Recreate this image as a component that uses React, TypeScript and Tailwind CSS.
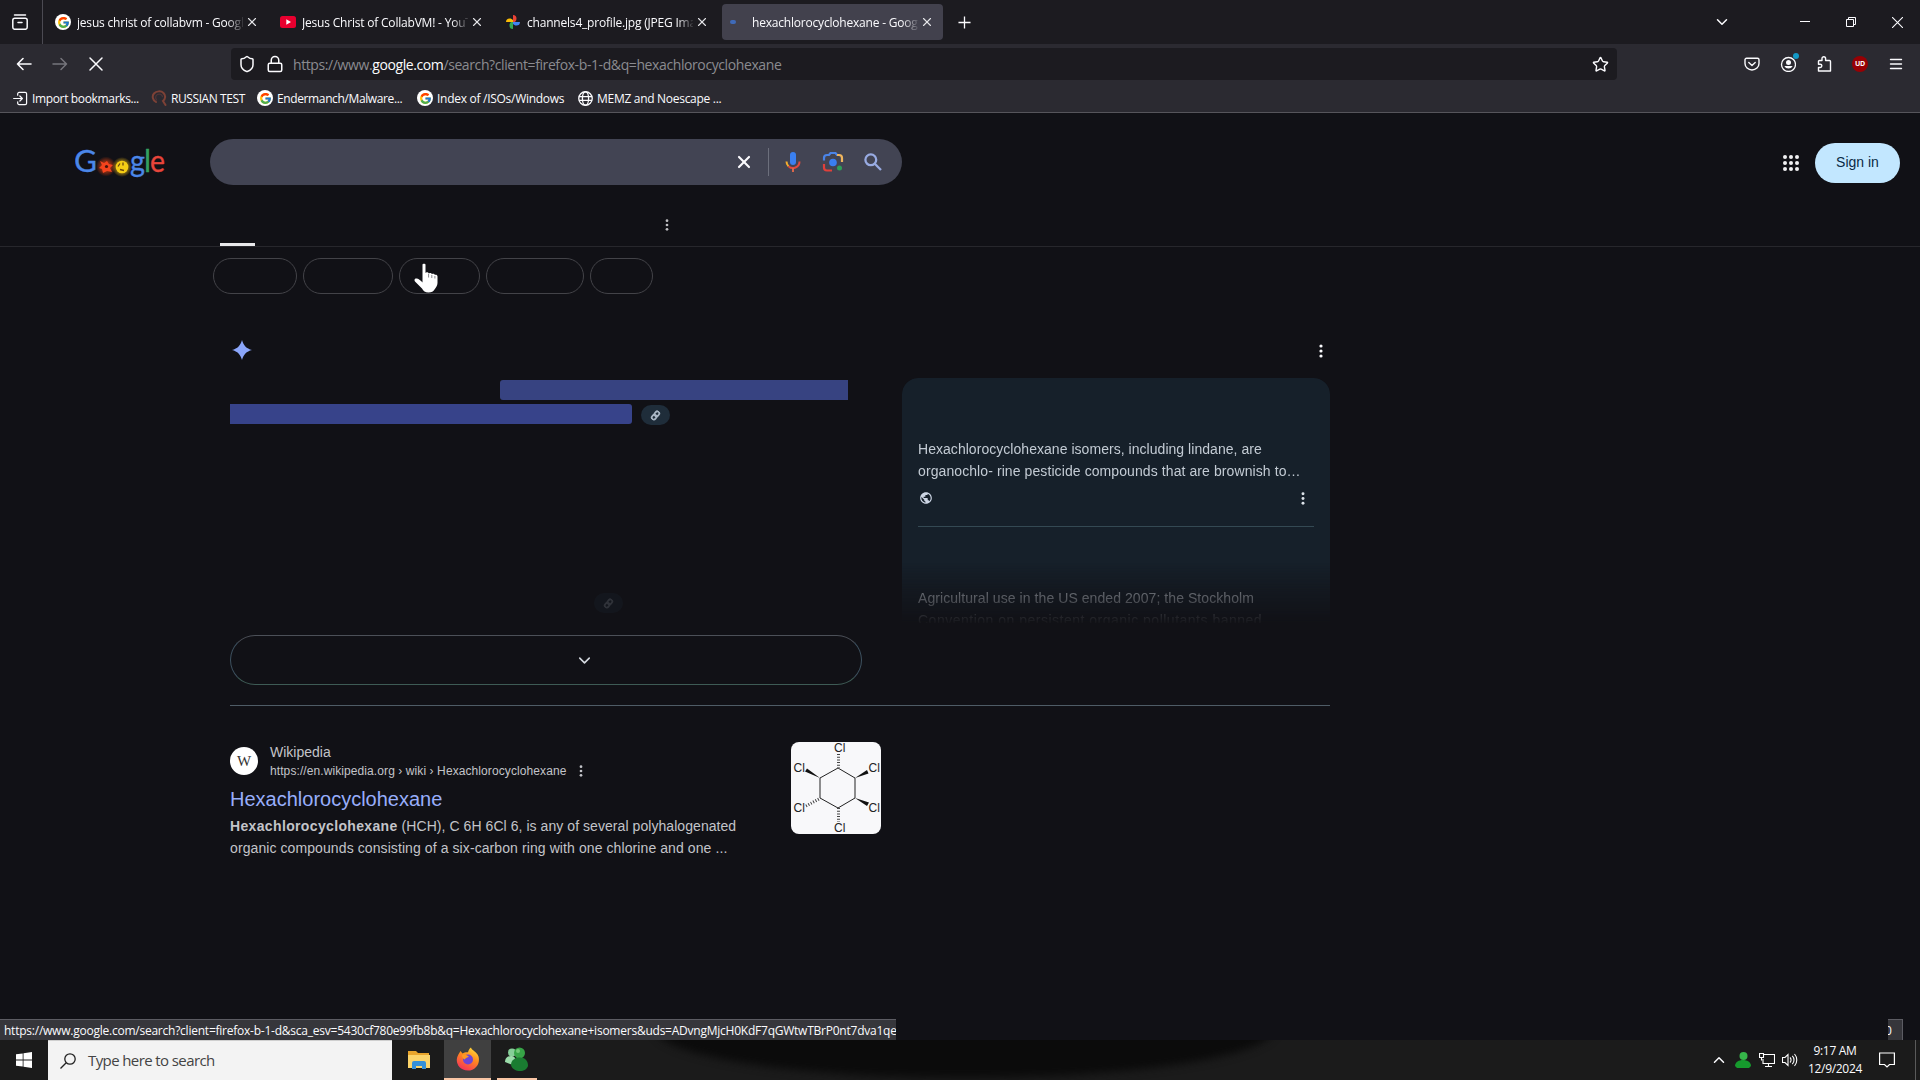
import type { ReactNode } from "react";
import { ChevronDown, ChevronUp, Lock, Shield, Star, X } from "lucide-react";
import { FcGoogle } from "react-icons/fc";
import { MdPublic } from "react-icons/md";

type Tab = {
  title: string;
  icon: ReactNode;
  active?: boolean;
};

type Bookmark = {
  label: string;
  icon: ReactNode;
  width: string;
  tracking: string;
};

const GoogleFavicon = () => (
  <span className="flex h-4 w-4 shrink-0 items-center justify-center rounded-full bg-white">
    <FcGoogle className="h-[13px] w-[13px]" />
  </span>
);

const YoutubeFavicon = () => (
  <svg viewBox="0 0 16 16" className="h-4 w-4 shrink-0">
    <rect y="2" width="16" height="12" rx="2.5" fill="#e8002f" />
    <path d="M6.3 5.3 11 8l-4.7 2.7z" fill="#fff" />
  </svg>
);

const PhotosFavicon = () => (
  <svg viewBox="0 0 16 16" className="h-4 w-4 shrink-0">
    <path d="M8 8V1a3.6 3.6 0 0 1 3.5 3.6c0 1.5-.6 2.6-1.5 3.4z" fill="#ea4335" />
    <path d="M8 8h7a3.6 3.6 0 0 1-3.6 3.5C9.9 11.5 8.8 10.9 8 10z" fill="#4285f4" />
    <path d="M8 8v7a3.6 3.6 0 0 1-3.5-3.6C4.5 9.9 5.1 8.8 6 8z" fill="#34a853" />
    <path d="M8 8H1a3.6 3.6 0 0 1 3.6-3.5C6.1 4.5 7.2 5.1 8 6z" fill="#fbbc04" />
  </svg>
);

const LoadingDot = () => (
  <span className="flex h-4 w-4 shrink-0 items-center">
    <span className="h-1 w-1.5 rounded-full bg-[#3f6ab8]" />
  </span>
);

const ImportIcon = () => (
  <svg viewBox="0 0 16 16" className="h-[15px] w-[15px] shrink-0" fill="none" stroke="#fbfbfe" strokeWidth="1.3" strokeLinecap="round" strokeLinejoin="round">
    <path d="M5 4.5V3a1.5 1.5 0 0 1 1.5-1.5H13A1.5 1.5 0 0 1 14.5 3v10a1.5 1.5 0 0 1-1.5 1.5H6.5A1.5 1.5 0 0 1 5 13v-1.5M.7 8h9M7.3 5.3 10 8l-2.7 2.7" />
  </svg>
);

const RussianIcon = () => (
  <svg viewBox="0 0 16 16" className="h-4 w-4 shrink-0" fill="none" strokeLinecap="round">
    <path d="M5 12C1.500 10 .8 6 3 3.500s7-3 9.500-.5 2 6-.5 8l2.500 4" stroke="#7d4136" strokeWidth="2" />
    <path d="M5.500 10C4 8 4.500 5.500 6.500 4.500s4.500 0 5 2" stroke="#4c3438" strokeWidth="1.3" />
  </svg>
);

const GlobeIcon = () => (
  <svg viewBox="0 0 16 16" className="h-[15px] w-[15px] shrink-0" fill="none" stroke="#fbfbfe" strokeWidth="1.4">
    <circle cx="8" cy="8" r="7.2" />
    <ellipse cx="8" cy="8" rx="3.3" ry="7.2" />
    <path d="M1 6h14M1 10h14" />
  </svg>
);

const tabs: Tab[] = [
  { title: "jesus christ of collabvm - Google Search", icon: <GoogleFavicon /> },
  { title: "Jesus Christ of CollabVM! - YouTube", icon: <YoutubeFavicon /> },
  { title: "channels4_profile.jpg (JPEG Image)", icon: <PhotosFavicon /> },
  { title: "hexachlorocyclohexane - Google Search", icon: <LoadingDot />, active: true },
];

const bookmarks: Bookmark[] = [
  { label: "Import bookmarks...", icon: <ImportIcon />, width: "w-[138px]", tracking: "tracking-[-0.35px]" },
  { label: "RUSSIAN TEST", icon: <RussianIcon />, width: "w-[106px]", tracking: "tracking-[-0.42px]" },
  { label: "Endermanch/Malware...", icon: <GoogleFavicon />, width: "w-[160px]", tracking: "tracking-[-0.38px]" },
  { label: "Index of /ISOs/Windows", icon: <GoogleFavicon />, width: "w-[161px]", tracking: "tracking-[-0.28px]" },
  { label: "MEMZ and Noescape ...", icon: <GlobeIcon />, width: "w-[160px]", tracking: "tracking-[-0.29px]" },
];

const chips = ["w-[84px]", "w-[90px]", "w-[81px]", "w-[98px]", "w-[63px]"];

const Dots = ({ className }: { className: string }) => (
  <svg viewBox="0 0 4 14" className={className} fill="currentColor">
    <circle cx="2" cy="2" r="1.6" />
    <circle cx="2" cy="7" r="1.6" />
    <circle cx="2" cy="12" r="1.6" />
  </svg>
);

const TabStrip = () => (
  <div className="flex h-11 bg-[#1c1b20]">
    <div className="flex w-[43px] items-center border-r border-[#4b4a52] pl-3">
      <svg viewBox="0 0 16 16" className="h-4 w-4" fill="none" stroke="#fbfbfe" strokeWidth="1.5" strokeLinecap="round">
        <rect x=".8" y="4.3" width="14.4" height="11" rx="2" />
        <path d="M2.5 1h11M6 8.5h4" />
      </svg>
    </div>
    <div className="flex gap-1 py-1 pl-1">
      {tabs.map((tab) => (
        <div
          key={tab.title}
          className={`flex h-9 w-[221px] items-center rounded px-2 ${tab.active ? "bg-[#42414d]" : ""}`}
        >
          {tab.icon}
          <span className="ml-1.5 w-[166px] overflow-hidden pt-0.5 text-[12px] tracking-[-0.2px] whitespace-nowrap [mask-image:linear-gradient(to_right,black_150px,transparent_168px)]">
            {tab.title}
          </span>
          <X className="ml-0.5 h-3.5 w-3.5 shrink-0 text-[#e6e6ea]" strokeWidth={1.9} />
        </div>
      ))}
    </div>
    <svg viewBox="0 0 14 14" className="mt-4 ml-[15px] h-[13px] w-[13px]" stroke="#fbfbfe" strokeWidth="1.4">
      <path d="M7 .5v13M.5 7h13" />
    </svg>
    <div className="ml-auto flex items-center pr-[17px]">
      <ChevronDown className="mr-[69px] h-[18px] w-[18px]" strokeWidth={2} />
      <svg viewBox="0 0 10 10" className="mr-9 h-2.5 w-2.5" stroke="#fbfbfe">
        <path d="M0 4.5h10" />
      </svg>
      <svg viewBox="0 0 10 10" className="mr-9 h-2.5 w-2.5" fill="none" stroke="#fbfbfe">
        <path d="M.5 2.5h7v7h-7zM2.5 2.5v-2h7v7h-2" />
      </svg>
      <svg viewBox="0 0 10 10" className="h-[11px] w-[11px]" stroke="#fbfbfe">
        <path d="m0 0 10 10M10 0 0 10" />
      </svg>
    </div>
  </div>
);

const NavBar = () => (
  <div className="flex h-10 items-center">
    <svg viewBox="0 0 16 16" className="ml-4 h-4 w-4" fill="none" stroke="#fbfbfe" strokeWidth="1.6" strokeLinecap="round" strokeLinejoin="round">
      <path d="M15 8H1.5M7 2.5 1.5 8 7 13.5" />
    </svg>
    <svg viewBox="0 0 16 16" className="ml-5 h-4 w-4" fill="none" stroke="#76757c" strokeWidth="1.5" strokeLinecap="round" strokeLinejoin="round">
      <path d="M1 8h13.5M9 2.5 14.5 8 9 13.5" />
    </svg>
    <svg viewBox="0 0 16 16" className="ml-5 h-4 w-4" stroke="#fbfbfe" strokeWidth="1.5" strokeLinecap="round">
      <path d="m2 2 12 12M14 2 2 14" />
    </svg>
    <div className="ml-[127px] flex h-8 w-[1386px] items-center rounded bg-[#1c1b20] pr-2 pl-[7px]">
      <Shield className="h-[18px] w-[18px]" strokeWidth={2} />
      <Lock className="ml-2.5 h-[18px] w-[18px]" strokeWidth={2} />
      <span className="ml-[9px] pt-px text-[14px] tracking-[-0.4px] whitespace-nowrap text-[#8b8b90]">
        https://www.<span className="text-[#fbfbfe]">google.com</span>
        /search?client=firefox-b-1-d&amp;q=hexachlorocyclohexane
      </span>
      <Star className="ml-auto h-[17px] w-[17px]" strokeWidth={2} />
    </div>
    <div className="ml-auto flex items-center gap-5 pr-4">
      <svg viewBox="0 0 16 16" className="h-4 w-4" fill="none" stroke="#fbfbfe" strokeWidth="1.4" strokeLinecap="round" strokeLinejoin="round">
        <path d="M2.5 2.2h11A1.5 1.5 0 0 1 15 3.7v3.8a7 6.5 0 0 1-14 0V3.7a1.5 1.5 0 0 1 1.500-1.5zM4.8 6.5 8 9.4l3.2-2.9" />
      </svg>
      <div className="relative h-4 w-4">
        <svg viewBox="0 0 16 16" className="h-4 w-4">
          <circle cx="8.5" cy="8.5" r="7" fill="none" stroke="#fbfbfe" strokeWidth="1.3" />
          <circle cx="8.5" cy="6.5" r="2.5" fill="#fbfbfe" />
          <path d="M4.3 10h8.4a4.7 4.7 0 0 1-8.4 0z" fill="#fbfbfe" />
        </svg>
        <span className="absolute -top-[3px] -right-[3px] h-1.5 w-1.5 rounded-full bg-[#1399c6]" />
      </div>
      <svg viewBox="0 0 16 16" className="h-4 w-4" fill="none" stroke="#fbfbfe" strokeWidth="1.4" strokeLinejoin="round">
        <path d="M6 4.5v-2a1.8 1.8 0 0 1 3.6 0v2h3.9a1 1 0 0 1 1 1V15h-12v-3.5h1.7a1.6 1.6 0 0 0 0-3.3H2.5V5.5a1 1 0 0 1 1-1z" />
      </svg>
      <span className="flex h-4 w-4 items-center justify-center rounded-full bg-[#970004] text-[7px] font-bold tracking-tighter">
        UD
      </span>
      <svg viewBox="0 0 16 16" className="h-4 w-4" stroke="#fbfbfe" strokeWidth="1.4" strokeLinecap="round">
        <path d="M2.5 3.5h11M2.5 8h11M2.5 12.5h11" />
      </svg>
    </div>
  </div>
);

const BookmarksBar = () => (
  <div className="flex h-[29px] items-center border-b border-[#56555b] pl-[13px]">
    {bookmarks.map((bookmark) => (
      <div key={bookmark.label} className={`flex items-center gap-1 ${bookmark.width}`}>
        {bookmark.icon}
        <span className={`pt-0.5 text-[12px] whitespace-nowrap ${bookmark.tracking}`}>{bookmark.label}</span>
      </div>
    ))}
  </div>
);

const GoogleLogo = () => (
  <svg viewBox="0 0 90 36" className="mt-2 h-9 w-[90px]" fontFamily="Lato, sans-serif" fontSize="30" strokeWidth=".3">
    <defs>
      <radialGradient id="redGlow">
        <stop offset=".5" stopColor="#a83413" stopOpacity=".8" />
        <stop offset="1" stopColor="#a83413" stopOpacity="0" />
      </radialGradient>
      <radialGradient id="yellowGlow">
        <stop offset=".5" stopColor="#c59a14" stopOpacity=".8" />
        <stop offset="1" stopColor="#c59a14" stopOpacity="0" />
      </radialGradient>
    </defs>
    <text x="-1" y="24" textLength="23" lengthAdjust="spacingAndGlyphs" fill="#4b87e8" stroke="#4b87e8">G</text>
    <circle cx="31" cy="18.5" r="10" fill="url(#redGlow)" />
    <path d="m25 13 4 2 3-2 2 3 4 1-3 3 2 4-5-1-4 2-1-4-3-1 3-3z" fill="#f5441d" />
    <circle cx="31.5" cy="18.5" r="1.6" fill="#47130c" />
    <circle cx="47" cy="19" r="10" fill="url(#yellowGlow)" />
    <circle cx="47" cy="19" r="6.3" fill="#f6ce15" />
    <path d="m43 18.500 2-3M48 14.500v3M45 21.500l4 1" stroke="#6b4710" strokeWidth="1.3" />
    <text x="55" y="24" textLength="15" lengthAdjust="spacingAndGlyphs" fill="#4b87e8" stroke="#4b87e8">g</text>
    <text x="69" y="24" fill="#34a060" stroke="#34a060">l</text>
    <text x="75" y="24" textLength="15" lengthAdjust="spacingAndGlyphs" fill="#e8453b" stroke="#e8453b">e</text>
  </svg>
);

const MicIcon = () => (
  <svg viewBox="0 0 24 24" className="h-6 w-6" fill="none">
    <rect x="9" y="2" width="6" height="13" rx="3" fill="#3a80f0" />
    <path d="M5.5 11.5a6.5 6.5 0 0 0 2 4.7" stroke="#f6ae2d" strokeWidth="2" />
    <path d="M7.5 16.2a6.5 6.5 0 0 0 11-4.7" stroke="#e04a3f" strokeWidth="2" />
    <path d="M12 18v4" stroke="#d8664a" strokeWidth="2" />
  </svg>
);

const LensIcon = () => (
  <svg viewBox="0 0 24 24" className="h-6 w-6" fill="none" strokeWidth="2.2">
    <path d="M3 10.5V8a3 3 0 0 1 3-3h2l1.5-2h5L16 5h1" stroke="#4a84e8" />
    <path d="M16 5h2a3 3 0 0 1 3 3v4" stroke="#efb55d" />
    <path d="M3 14v3.5a3 3 0 0 0 3 3h5" stroke="#e0403b" />
    <circle cx="12" cy="12.5" r="3.8" fill="#3a7ef0" />
    <circle cx="18.5" cy="18" r="2.5" fill="#2f9e58" />
  </svg>
);

const SearchIcon = () => (
  <svg viewBox="0 0 18 18" className="ml-[19px] h-[18px] w-[18px]" fill="none" stroke="#98abe2" strokeWidth="2.3">
    <circle cx="6.8" cy="6.8" r="5.4" />
    <path d="m10.8 10.8 6.2 6.2" />
  </svg>
);

const HandCursor = () => (
  <svg viewBox="0 0 24 30" className="absolute top-1 left-[14px] h-[30px] w-6">
    <path
      d="M8.5 1.5c0-1 3-1 3 0V10c.5-1 3-.8 3.200.5.6-1 3-.7 3.200.7.8-.8 2.800-.5 3 .8.8-.6 2.600-.2 2.600 1.500V20c0 3-2 5-3 6.500-1 2-3 3-6 3-3.500 0-5-1.500-6.500-4L1 18.500C-.3 16.500 1 15 3 15.500c2 .5 3.500 2 5.500 4z"
      fill="#fff"
    />
    <path d="M14.6 11v3.5M17.8 12v3M20.9 13v2.5" stroke="#55555c" strokeWidth=".7" />
  </svg>
);

const SearchHeader = () => (
  <>
    <div className="flex h-[72px] items-start pt-[26px] pl-[75px]">
      <div className="flex h-[46px] w-[135px] items-center">
        <GoogleLogo />
      </div>
      <div className="flex h-[46px] w-[692px] items-center justify-end rounded-full bg-[#424453] pr-5">
        <X className="h-5 w-5" strokeWidth={2.6} />
        <span className="ml-[14px] h-7 w-px bg-[#6c6f7c]" />
        <span className="ml-3">
          <MicIcon />
        </span>
        <span className="ml-4">
          <LensIcon />
        </span>
        <SearchIcon />
      </div>
      <div className="mr-5 ml-auto flex items-center gap-4 pt-1">
        <svg viewBox="0 0 16 16" className="h-4 w-4" fill="#f1f1f3">
          {[2, 8, 14].map((y) =>
            [2, 8, 14].map((x) => <circle key={`${x}-${y}`} cx={x} cy={y} r="2" />),
          )}
        </svg>
        <button type="button" className="h-10 w-[85px] rounded-full bg-[#c2e7ff] pb-0.5 text-sm text-[#0a2a45]">
          Sign in
        </button>
      </div>
    </div>
    <div className="flex h-[62px] items-end border-b border-[#27272c] pl-[220px]">
      <span className="h-[3px] w-[35px] bg-[#e8e8ea]" />
      <Dots className="mb-[15px] ml-[410px] h-3 w-1 text-[#bfbfc3]" />
    </div>
    <div className="flex gap-1.5 pt-[11px] pl-[213px]">
      {chips.map((width, i) => (
        <div key={width} className={`relative h-9 rounded-full border border-[#434348] ${width}`}>
          {i === 2 && <HandCursor />}
        </div>
      ))}
    </div>
  </>
);

const LinkPill = ({ className }: { className: string }) => (
  <span className={`flex h-5 w-[29px] items-center justify-center rounded-full bg-[#1f2d3a] ${className}`}>
    <svg viewBox="0 0 12 12" className="h-[11px] w-[11px] -rotate-50" fill="none" stroke="#a9b6c4" strokeWidth="1.9">
      <rect x=".8" y="3.8" width="5.7" height="4.4" rx="2.2" />
      <rect x="5.5" y="3.8" width="5.7" height="4.4" rx="2.2" />
    </svg>
  </span>
);

const Overview = () => (
  <div className="mt-9 ml-[230px] w-[1100px] border-b border-[#4f5c66] pb-5">
    <div className="flex h-12 items-start justify-between pt-2.5 pr-[7px] pl-0.5">
      <svg viewBox="0 0 20 20" className="h-5 w-5" fill="#8ba6fb">
        <path d="M10 0c1.3 5.2 4.5 8.7 10 10-5.5 1.3-8.7 4.8-10 10C8.7 14.8 5.5 11.3 0 10 5.500 8.7 8.7 5.200 10 0z" />
      </svg>
      <Dots className="mt-1 h-[14px] w-1" />
    </div>
    <div className="flex h-[307px] justify-between">
      <div className="flex w-[632px] flex-col pt-0.5">
        <div className="ml-[270px] h-5 w-[348px] rounded-l-[3px] bg-[#374381]" />
        <div className="mt-1 flex">
          <div className="h-5 w-[402px] rounded-r-[3px] bg-[#37438a]" />
          <LinkPill className="mt-px ml-[9px]" />
        </div>
        <LinkPill className="mt-auto mb-[22px] ml-[364px] opacity-20" />
        <div className="flex h-[50px] items-center rounded-full border border-t-[#4c5058] border-r-[#3e5260] border-b-[#3e5b55] border-l-[#3e5260] pl-[344px]">
          <ChevronDown className="h-[19px] w-[19px] text-[#d5d9e0]" strokeWidth={2} />
        </div>
      </div>
      <div className="h-[245px] w-[428px] overflow-hidden rounded-t-2xl bg-[#16202a] px-4 pt-[60px] text-sm leading-[22px] text-[#c3cbd4] [mask-image:linear-gradient(to_bottom,black_184px,rgba(0,0,0,.5)_212px,transparent_247px)]">
        <p className="whitespace-nowrap">
          <span className="tracking-[0.04px]">Hexachlorocyclohexane isomers, including lindane, are</span>
          <br />
          <span className="tracking-[0.09px]">organochlo- rine pesticide compounds that are brownish to…</span>
        </p>
        <div className="flex h-[45px] items-center justify-between border-b border-[#344953] pr-[9px] pb-3">
          <MdPublic className="ml-px h-[14px] w-[14px] text-[#ccd5e4]" />
          <Dots className="h-[13px] w-1 text-[#dde3ea]" />
        </div>
        <p className="pt-[60px] whitespace-nowrap">
          <span className="tracking-[0.07px]">Agricultural use in the US ended 2007; the Stockholm</span>
          <br />
          <span className="tracking-[0.5px]">Convention on persistent organic pollutants banned...</span>
        </p>
      </div>
    </div>
  </div>
);

const Molecule = () => (
  <svg viewBox="0 0 90 92" className="h-[92px] w-[90px] rounded-lg bg-[#f8f8fa]" fontFamily="Liberation Sans, sans-serif" fontSize="12">
    <path d="m47 26 17 10v20l-17 10-18-10V36z" fill="none" stroke="#222" />
    <path d="M29 36 14 29.5l2-3zM64 36l12-8 1.5 3.5zM64 56l12 8 2-3.5z" fill="#111" />
    <path d="M47.5 12v14M47.5 66v14" stroke="#444" strokeWidth="3" strokeDasharray="1 1.7" />
    <path d="m15 64 13-7" stroke="#444" strokeWidth="3" strokeDasharray="1 1.7" />
    <g fill="#222">
      <text x="43" y="10">Cl</text>
      <text x="2.5" y="30">Cl</text>
      <text x="77.5" y="30">Cl</text>
      <text x="2.5" y="70">Cl</text>
      <text x="77.5" y="70">Cl</text>
      <text x="43" y="90">Cl</text>
    </g>
  </svg>
);

const SearchResult = () => (
  <div className="mt-9 ml-[230px] flex w-[651px] justify-between">
    <div className="text-[#c3c4c9]">
      <div className="flex">
        <span className="mt-[5px] flex h-7 w-7 items-center justify-center rounded-full bg-white font-['Liberation_Serif'] text-[15px] text-[#333]">
          W
        </span>
        <div className="ml-3">
          <div className="text-sm leading-5">Wikipedia</div>
          <div className="flex items-center text-xs leading-[18px] tracking-[0.09px]">
            https://en.wikipedia.org › wiki › Hexachlorocyclohexane
            <Dots className="ml-[13px] h-3 w-1" />
          </div>
        </div>
      </div>
      <h3 className="mt-1.5 text-xl leading-[26px] text-[#98aefb]">Hexachlorocyclohexane</h3>
      <p className="mt-[3px] text-sm leading-[22px] whitespace-nowrap">
        <b className="tracking-[0.35px]">Hexachlorocyclohexane</b>
        <span className="tracking-[0.06px]"> (HCH), C 6H 6Cl 6, is any of several polyhalogenated</span>
        <br />
        <span className="tracking-[0.09px]">
          organic compounds consisting of a six-carbon ring with one chlorine and one ...
        </span>
      </p>
    </div>
    <Molecule />
  </div>
);

const StatusBar = () => (
  <div className="mt-auto flex h-[21px] justify-between pr-[17px] text-[12px] leading-[22px]">
    <div className="w-[896px] overflow-hidden border-t border-[#5c5c63] bg-[#36363b] pl-1 tracking-[-0.235px] whitespace-nowrap">
      https://www.google.com/search?client=firefox-b-1-d&amp;sca_esv=5430cf780e99fb8b&amp;q=Hexachlorocyclohexane+isomers&amp;uds=ADvngMjcH0KdF7qGWtwTBrP0nt7dva1qe
    </div>
    <div className="flex w-[15px] justify-start overflow-hidden border-t border-r border-[#5c5c63] bg-[#36363b]">
      <span className="-ml-[3px]">0</span>
    </div>
  </div>
);

const FolderIcon = () => (
  <svg viewBox="0 0 22 20" className="h-5 w-[22px]">
    <path d="M0 1h8l2 2h11v5H0z" fill="#e9a52c" />
    <path d="M0 5h22v13H0z" fill="#fcd46a" />
    <path d="M4 19v-6a2 2 0 0 1 2-2h10a2 2 0 0 1 2 2v6h-4v-3H8v3z" fill="#3590d8" />
  </svg>
);

const FirefoxIcon = () => (
  <svg viewBox="0 0 24 24" className="h-6 w-6">
    <defs>
      <linearGradient id="fox" x1=".8" y1="0" x2=".3" y2="1">
        <stop offset="0" stopColor="#ffdf3b" />
        <stop offset=".45" stopColor="#ff8a1f" />
        <stop offset="1" stopColor="#f5305b" />
      </linearGradient>
    </defs>
    <path d="M3 6.5 4.5 4l2 2.5C8 5.5 10 5 12 5.2 12.5 3 13.5 1.5 15 .5c.5 3 6 4 7.5 9 2 7-3 14-10.5 14S.5 18 .8 12.5C1 10 2 8 3 6.5z" fill="url(#fox)" />
    <circle cx="12" cy="12.5" r="5" fill="#6d45d5" />
    <path d="M6 8c3-1 5 0 7 2-2 0-3 1-4.5 2.5C7 12 6 10 6 8z" fill="#ff9a24" />
  </svg>
);

const PeopleIcon = () => (
  <svg viewBox="0 0 24 24" className="h-6 w-6">
    <circle cx="7" cy="5.5" r="4" fill="#86cf98" />
    <path d="M0 15c0-4 3-6 6-6s5 2 5 6l-3 3z" fill="#9bdcaa" />
    <circle cx="14.5" cy="6" r="5.5" fill="#37a447" />
    <path d="M6 18c0-5 4-7.5 9-7.5s8 3 8 8.5c-1 3-4 5-8 5s-8-2-9-6z" fill="#1a7c31" />
    <circle cx="13" cy="4" r="2" fill="#73c878" />
  </svg>
);

const Taskbar = () => (
  <div className="relative flex h-10 items-center overflow-hidden bg-[#1b1b1b] pr-1">
    <div className="absolute -top-[62px] left-[655px] h-[100px] w-[620px] rounded-[50%] bg-[#0b0b0b] blur-[4px]" />
    <svg viewBox="0 0 16 16" className="ml-4 h-4 w-4" fill="#fff">
      <path d="M0 2.3 6.7 1.4v6.2H0zM7.5 1.3 16 0v7.6H7.5zM0 8.4h6.7v6.2L0 13.7zM7.5 8.4H16V16l-8.5-1.2z" />
    </svg>
    <div className="ml-4 flex h-full w-[344px] items-center border-t border-[#cfcfcf] bg-[#f3f3f3] pl-3">
      <svg viewBox="0 0 16 16" className="h-4 w-4" fill="none" stroke="#222" strokeWidth="1.3">
        <circle cx="10" cy="6" r="5.2" />
        <path d="M6.2 9.8.5 15.5" />
      </svg>
      <span className="ml-3 text-[15px] tracking-[-0.6px] text-[#444]">Type here to search</span>
    </div>
    <div className="ml-4">
      <FolderIcon />
    </div>
    <div className="ml-[14px] flex h-full w-[47px] items-center justify-center border-b-2 border-[#f9c6a5] bg-[#404040]">
      <FirefoxIcon />
    </div>
    <div className="ml-1.5 flex h-full w-10 items-center justify-center border-b-2 border-[#f9c6a5]">
      <PeopleIcon />
    </div>
    <div className="ml-auto flex items-center">
      <ChevronUp className="h-[18px] w-[18px]" strokeWidth={2} />
      <svg viewBox="0 0 16 16" className="ml-[7px] h-4 w-4">
        <circle cx="8.5" cy="4" r="4" fill="#36b54a" />
        <path d="M0 14c0-4 4-6 8-6s8 2 8 6l-2 2H2z" fill="#169a2d" />
      </svg>
      <svg viewBox="0 0 16 16" className="ml-2 h-4 w-4" fill="none" stroke="#fff" strokeWidth="1.1">
        <path d="M5 2.5h10.5v9H4V7M.5 1.5h4v4h-4zM2.5 5.5v3M9.5 11.5v3M6 14.5h7" />
      </svg>
      <svg viewBox="0 0 16 16" className="ml-[7px] h-4 w-4" fill="none" stroke="#fff" strokeWidth="1.1">
        <path d="M.5 5.5H3l3-3v11l-3-3H.5zM8 5.5a3.5 3.5 0 0 1 0 5M10.3 3.8a6 6 0 0 1 0 8.4M12.5 2a9 9 0 0 1 0 12" />
      </svg>
      <div className="ml-[7px] w-[60px] text-center text-[12px] leading-[18px] tracking-[-0.3px] whitespace-nowrap">
        9:17 AM
        <br />
        12/9/2024
      </div>
      <svg viewBox="0 0 16 16" className="ml-[14px] h-4 w-4" fill="none" stroke="#fff" strokeWidth="1.2">
        <path d="M.6 1h14.8v11.5h-4.9L8 15l-2.5-2.5H.6z" />
      </svg>
      <span className="ml-5 h-10 w-px bg-[#5a5a5a]" />
    </div>
  </div>
);

const App = () => (
  <div className="flex h-[1080px] w-[1920px] flex-col overflow-hidden bg-[#111116] font-['Open_Sans','Noto_Sans',sans-serif] text-[#fbfbfe]">
    <header className="bg-[#2b2a31]">
      <TabStrip />
      <NavBar />
      <BookmarksBar />
    </header>
    <main className="font-['Liberation_Sans',Arial,sans-serif]">
      <SearchHeader />
      <Overview />
      <SearchResult />
    </main>
    <StatusBar />
    <Taskbar />
  </div>
);

export default App;
